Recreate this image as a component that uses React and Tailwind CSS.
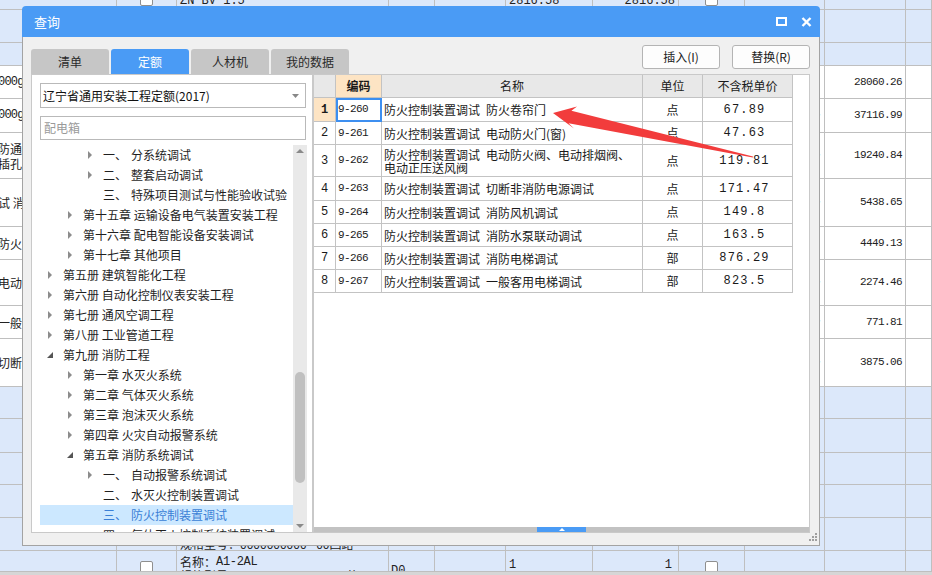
import React from "react";

const CJK = "font-['Noto_Sans_CJK_SC',sans-serif]";
const MONO = "font-['Liberation_Mono',monospace]";

// spreadsheet behind the dialog
const COLS = [117, 60, 212, 46, 71, 87, 86, 66, 80, 81, 26];

const SHEET = [
  { h: 10, blue: true, kind: "top" },
  { h: 33, blue: true },
  { h: 23, blue: true },
  { h: 33, left: ["000g"], right: "28060.26" },
  { h: 34, left: ["000g"], right: "37116.99", mark: true },
  { h: 46, left: ["防通信", "插孔"], right: "19240.84", mark: true },
  { h: 48, left: ["试  消"], right: "5438.65", mark: true },
  { h: 33, left: ["防火"], right: "4449.13" },
  { h: 46, left: ["电动"], right: "2274.46", mark: true },
  { h: 33, left: ["一般"], right: "771.81", mark: true },
  { h: 48, left: ["切断"], right: "3875.06", mark: true },
  { h: 32, blue: true },
  { h: 34, blue: true },
  { h: 32, blue: true },
  { h: 33, blue: true },
  { h: 33, blue: true, kind: "spec" },
  { h: 21, blue: true, kind: "bottom" },
];

const TREE = [
  [3, "c", "一、", "分系统调试"],
  [3, "c", "二、", "整套启动调试"],
  [3, null, "三、", "特殊项目测试与性能验收试验"],
  [2, "c", "第十五章 运输设备电气装置安装工程"],
  [2, "c", "第十六章 配电智能设备安装调试"],
  [2, "c", "第十七章 其他项目"],
  [1, "c", "第五册 建筑智能化工程"],
  [1, "c", "第六册 自动化控制仪表安装工程"],
  [1, "c", "第七册 通风空调工程"],
  [1, "c", "第八册 工业管道工程"],
  [1, "e", "第九册 消防工程"],
  [2, "c", "第一章 水灭火系统"],
  [2, "c", "第二章 气体灭火系统"],
  [2, "c", "第三章 泡沫灭火系统"],
  [2, "c", "第四章 火灾自动报警系统"],
  [2, "e", "第五章 消防系统调试"],
  [3, "c", "一、", "自动报警系统调试"],
  [3, null, "二、", "水灭火控制装置调试"],
  [3, null, "三、", "防火控制装置调试", true],
  [3, null, "四、", "气体灭火控制系统装置调试"],
];

const ROWS = [
  { n: 1, code: "9-260", name: ["防火卷帘门"], unit: "点", price: "67.89", h: 24 },
  { n: 2, code: "9-261", name: ["电动防火门(窗)"], unit: "点", price: "47.63", h: 23 },
  { n: 3, code: "9-262", name: ["电动防火阀、电动排烟阀、", "电动正压送风阀"], unit: "点", price: "119.81", h: 32 },
  { n: 4, code: "9-263", name: ["切断非消防电源调试"], unit: "点", price: "171.47", h: 24 },
  { n: 5, code: "9-264", name: ["消防风机调试"], unit: "点", price: "149.8", h: 23 },
  { n: 6, code: "9-265", name: ["消防水泵联动调试"], unit: "点", price: "163.5", h: 23 },
  { n: 7, code: "9-266", name: ["消防电梯调试"], unit: "部", price: "876.29", h: 23 },
  { n: 8, code: "9-267", name: ["一般客用电梯调试"], unit: "部", price: "823.5", h: 23 },
];

const Check = ({ className = "" }) => (
  <div className={`w-[13px] h-[13px] bg-white border border-[#8f8f8f] rounded-[2px] shrink-0 ${className}`} />
);

function SheetCell({ row, i }) {
  const base = "text-[12px] text-[#222] whitespace-nowrap";
  if (row.kind === "top") {
    if (i === 1) return <div className="flex justify-center items-end h-full"><Check className="mb-[3px]" /></div>;
    if (i === 2) return <div className={`${MONO} ${base} text-[11px] leading-[10px] pl-[3px] -mt-[4px]`}>ZN BV 1.5</div>;
    if (i === 5) return <div className={`${MONO} ${base} text-[11px] leading-[10px] pl-[3px] -mt-[4px]`}>2816.58</div>;
    if (i === 6) return <div className={`${MONO} ${base} text-[11px] leading-[10px] pr-[3px] text-right -mt-[4px]`}>2816.58</div>;
    if (i === 7) return <div className="flex justify-center items-end h-full"><Check className="mb-[3px]" /></div>;
    return null;
  }
  if (row.kind === "spec") {
    if (i === 2)
      return <div className={`${CJK} ${base} h-full flex items-end pl-[3px] leading-[12px]`}>规格型号：0000000000 - 00回路</div>;
    return null;
  }
  if (row.kind === "bottom") {
    if (i === 1) return <div className="flex justify-center pt-[10px]"><Check /></div>;
    if (i === 2)
      return (
        <div className={`${CJK} ${base} pl-[3px] pt-[4px] leading-[14px]`}>
          <div className="flex"><span>名称：</span><span className={`${MONO} tracking-[-0.3px]`}>A1-2AL</span></div>
          <div className="flex justify-between pr-[30px]"><span>规格型号</span><span>三芯</span></div>
        </div>
      );
    if (i === 3) return <div className={`${MONO} ${base} text-[11px] pl-[2px] pt-[14px] leading-[12px]`}>D0</div>;
    if (i === 5) return <div className={`${MONO} ${base} text-[11px] pl-[3px] pt-[8px] leading-[12px]`}>1</div>;
    if (i === 6) return <div className={`${MONO} ${base} text-[11px] pr-[6px] pt-[8px] leading-[12px] text-right`}>1</div>;
    if (i === 7) return <div className="flex justify-center pt-[10px]"><Check /></div>;
    return null;
  }
  if (i === 0 && row.left)
    return (
      <div className={`${CJK} ${base} h-full flex flex-col justify-center -ml-[2px] leading-[15px]`}>
        {row.left.map((t) => (
          <span key={t} className={t.startsWith("000") ? `${MONO} text-[12px] tracking-[-0.8px]` : ""}>{t}</span>
        ))}
      </div>
    );
  if (i === 8 && row.mark)
    return <div className={`${CJK} ${base} h-full flex items-center justify-end pr-[3px]`}>台</div>;
  if (i === 9 && row.right)
    return (
      <div className={`${MONO} text-[11px] tracking-[-0.6px] text-[#222] h-full flex items-center justify-end pr-[3px]`}>
        {row.right}
      </div>
    );
  return null;
}

function Sheet() {
  return (
    <div className="flex flex-col w-[932px] h-[575px] overflow-hidden bg-white">
      {SHEET.map((row, r) => (
        <div
          key={r}
          className={`flex shrink-0 border-b border-[#bfbfbf] ${row.blue ? "bg-[#dce8fa]" : "bg-white"}`}
          style={{ height: row.h }}
        >
          {COLS.map((w, i) => (
            <div key={i} className="shrink-0 border-r border-[#bfbfbf] overflow-hidden" style={{ width: w }}>
              <SheetCell row={row} i={i} />
            </div>
          ))}
        </div>
      ))}
      <div className="flex-1 bg-[#d6d6d6]" />
    </div>
  );
}

function TreeArrow({ open }) {
  return open ? (
    <svg width="6" height="6" viewBox="0 0 6 6" className="-ml-[1px]">
      <polygon points="6,0 6,6 0,6" fill="#555" />
    </svg>
  ) : (
    <svg width="5" height="8" viewBox="0 0 5 8">
      <polygon points="0,0 4,4 0,8" fill="#8c8c8c" />
    </svg>
  );
}

function TreeRow({ item }) {
  const [lvl, state, a, b, sel] = item;
  const pad = lvl === 1 ? "pl-[8px]" : lvl === 2 ? "pl-[28px]" : "pl-[48px]";
  return (
    <div
      className={`h-[20px] shrink-0 flex items-center whitespace-nowrap ${pad} ${
        sel ? "bg-[#cce8ff] text-[#3a7fd6]" : "text-[#1f1f1f]"
      }`}
    >
      <span className="w-[15px] shrink-0 flex items-center">{state && <TreeArrow open={state === "e"} />}</span>
      {lvl === 3 ? (
        <>
          <span className="w-[28px] shrink-0">{a}</span>
          <span>{b}</span>
        </>
      ) : (
        <span>{a}</span>
      )}
    </div>
  );
}

function LeftPanel() {
  return (
    <div className="w-[282px] shrink-0 bg-white border border-[#c9c9c9] flex flex-col pl-[8px] pt-[8px]">
      <div className="w-[266px] h-[25px] border border-[#b9b9b9] flex items-center pl-[2px] pr-[6px] text-[12px] text-[#111]">
        <span>辽宁省通用安装工程定额(2017)</span>
        <svg width="7" height="4" viewBox="0 0 7 4" className="ml-auto">
          <polygon points="0,0 7,0 3.5,4" fill="#888" />
        </svg>
      </div>
      <div className="w-[266px] h-[24px] mt-[8px] border border-[#b9b9b9] flex items-center pl-[3px] text-[12px] text-[#9a9a9a]">
        配电箱
      </div>
      <div className="w-[267px] h-[387px] mt-[5px] flex overflow-hidden">
        <div className="flex-1 flex flex-col overflow-hidden text-[12px]">
          {TREE.map((item, i) => (
            <TreeRow key={i} item={item} />
          ))}
        </div>
        <div className="w-[14px] shrink-0 bg-[#e9e9e9] flex flex-col items-center">
          <svg width="8" height="4" viewBox="0 0 8 4" className="mt-[4px]">
            <polygon points="0,4 8,4 4,0" fill="#8a8a8a" />
          </svg>
          <div className="w-[10px] h-[111px] mt-[219px] rounded-full bg-[#c0c0c0]" />
          <svg width="8" height="4" viewBox="0 0 8 4" className="mt-auto mb-[4px]">
            <polygon points="0,0 8,0 4,4" fill="#8a8a8a" />
          </svg>
        </div>
      </div>
    </div>
  );
}

const W = [22, 46, 261, 60, 90];
const CELL = "shrink-0 border-r border-b border-[#c3c3c3] flex items-center";

function Table() {
  return (
    <div className="flex flex-col text-[12px] text-[#1a1a1a]">
      <div className="h-[23px] flex">
        <div className={`${CELL} bg-[#e8e8e8]`} style={{ width: W[0] }} />
        <div className={`${CELL} bg-[#fde4c4] justify-center font-bold`} style={{ width: W[1] }}>编码</div>
        <div className={`${CELL} bg-[#e8e8e8] justify-center`} style={{ width: W[2] }}>名称</div>
        <div className={`${CELL} bg-[#e8e8e8] justify-center`} style={{ width: W[3] }}>单位</div>
        <div className={`${CELL} bg-[#e8e8e8] justify-center`} style={{ width: W[4] }}>不含税单价</div>
      </div>
      {ROWS.map((r) => (
        <div key={r.n} className="flex" style={{ height: r.h }}>
          <div
            className={`${CELL} justify-center ${MONO} text-[12px] ${r.n === 1 ? "bg-[#fde4c4] font-bold" : ""}`}
            style={{ width: W[0] }}
          >
            {r.n}
          </div>
          <div
            className={`${CELL} pl-[2px] ${MONO} text-[11px] tracking-[-0.6px] ${
              r.n === 1 ? "outline-2 outline-[#3d8ff0] -outline-offset-2" : ""
            }`}
            style={{ width: W[1] }}
          >
            {r.code}
          </div>
          <div className={`${CELL} pl-[2px] leading-[13px]`} style={{ width: W[2] }}>
            <div className="flex flex-col">
              {r.name.map((t, k) => (
                <span key={t} className="whitespace-nowrap">
                  {k === 0 && <span className="mr-[6px]">防火控制装置调试</span>}
                  {t}
                </span>
              ))}
            </div>
          </div>
          <div className={`${CELL} justify-center`} style={{ width: W[3] }}>{r.unit}</div>
          <div className={`${CELL} justify-center ${MONO} text-[12px] tracking-[1.2px] pr-[6px]`} style={{ width: W[4] }}>
            {r.price}
          </div>
        </div>
      ))}
    </div>
  );
}

function RightPanel() {
  return (
    <div className="flex-1 bg-white border border-[#c9c9c9] flex flex-col">
      <Table />
      <div className="mt-auto h-[5px] bg-[#c2c2c2] flex">
        <div className="ml-[223px] w-[49px] h-full bg-[#4a9bf5] flex items-center justify-center">
          <svg width="6" height="3" viewBox="0 0 6 3">
            <polygon points="0,3 6,3 3,0" fill="#fff" />
          </svg>
        </div>
      </div>
    </div>
  );
}

function Dialog() {
  return (
    <div className={`absolute left-[22px] top-[6px] w-[798px] h-[540px] flex flex-col ${CJK}`}>
      <div className="h-[31px] shrink-0 bg-[#4a9bf5] rounded-t-[4px] flex items-center pl-[12px] pr-[8px]">
        <span className="text-white text-[13px]">查询</span>
        <div className="ml-auto flex items-center gap-[14px]">
          <svg width="11" height="9" viewBox="0 0 11 9">
            <rect x="1" y="1" width="9" height="7" fill="none" stroke="#fff" strokeWidth="2" />
          </svg>
          <svg width="11" height="10" viewBox="0 0 11 10">
            <path d="M1.5 1 L9.5 9 M9.5 1 L1.5 9" stroke="#fff" strokeWidth="2.4" />
          </svg>
        </div>
      </div>
      <div className="flex-1 bg-[#f0f0f0] border-x border-b border-[#a3a3a3] flex flex-col pl-[8px] pr-[9px]">
        <div className="h-[37px] shrink-0 flex">
          <div className="flex items-end gap-[2px] text-[12px]">
            {["清单", "定额", "人材机", "我的数据"].map((t) => (
              <div
                key={t}
                className={`w-[78px] h-[25px] rounded-t-[3px] flex items-center justify-center ${
                  t === "定额" ? "bg-[#4a9bf5] text-white" : "bg-[#c6c6c6] text-[#2a2a2a]"
                }`}
              >
                {t}
              </div>
            ))}
          </div>
          <div className="ml-auto mt-[8px] flex gap-[12px] text-[12px] text-[#222]">
            {["插入(I)", "替换(R)"].map((t) => (
              <div
                key={t}
                className="w-[78px] h-[24px] bg-[#fdfdfd] border border-[#b4b4b4] rounded-[3px] flex items-center justify-center"
              >
                {t}
              </div>
            ))}
          </div>
        </div>
        <div className="h-[459px] shrink-0 flex">
          <LeftPanel />
          <RightPanel />
        </div>
        <div className="flex-1 flex justify-end items-end pb-[4px] -mr-[7px]">
          <svg width="8" height="8" viewBox="0 0 8 8">
            <rect x="6" y="0" width="2" height="2" fill="#a0a0a0" />
            <rect x="3" y="3" width="2" height="2" fill="#a0a0a0" />
            <rect x="6" y="3" width="2" height="2" fill="#a0a0a0" />
            <rect x="0" y="6" width="2" height="2" fill="#a0a0a0" />
            <rect x="3" y="6" width="2" height="2" fill="#a0a0a0" />
            <rect x="6" y="6" width="2" height="2" fill="#a0a0a0" />
          </svg>
        </div>
      </div>
    </div>
  );
}

export default function App() {
  return (
    <div className={`relative w-[932px] h-[575px] overflow-hidden ${CJK}`}>
      <Sheet />
      <Dialog />
      {/* red annotation arrow */}
      <svg className="absolute left-0 top-0 pointer-events-none" width="932" height="575" viewBox="0 0 932 575">
        <polygon
          points="553,113 577,106.5 571.4,110.7 753,156.5 752.8,157.5 568.6,123.3 574,128.5"
          fill="#f23c3c"
        />
      </svg>
    </div>
  );
}
